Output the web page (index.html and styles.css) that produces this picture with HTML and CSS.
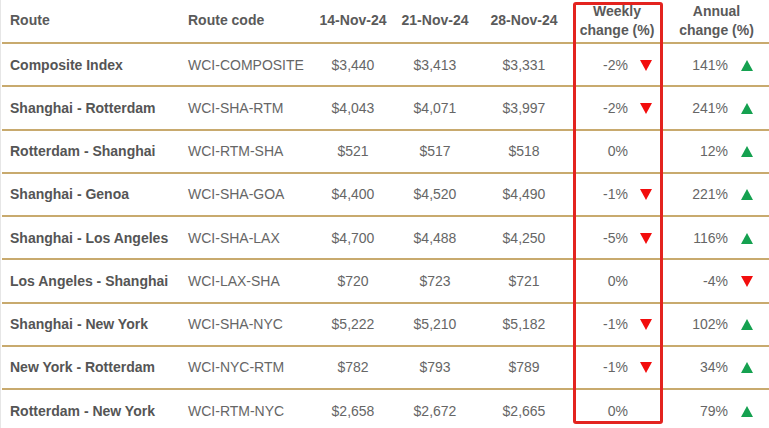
FILE: index.html
```html
<!DOCTYPE html>
<html>
<head>
<meta charset="utf-8">
<link rel="stylesheet" href="styles.css">
</head>
<body>
<div class="wrap">
  <table class="wci">
    <colgroup>
      <col class="c-route"><col class="c-code"><col class="c-d1"><col class="c-d2"><col class="c-d3"><col class="c-wk"><col class="c-yr">
    </colgroup>
    <thead>
      <tr>
        <th class="left">Route</th>
        <th class="left code">Route code</th>
        <th>14-Nov-24</th>
        <th>21-Nov-24</th>
        <th>28-Nov-24</th>
        <th class="wk">Weekly<br>change (%)</th>
        <th class="yr">Annual<br>change (%)</th>
      </tr>
    </thead>
    <tbody>
      <tr><td class="route">Composite Index</td><td class="code">WCI-COMPOSITE</td><td>$3,440</td><td>$3,413</td><td>$3,331</td><td class="chg wk">-2%<span class="arr down"></span></td><td class="chg yr">141%<span class="arr up"></span></td></tr>
      <tr><td class="route">Shanghai - Rotterdam</td><td class="code">WCI-SHA-RTM</td><td>$4,043</td><td>$4,071</td><td>$3,997</td><td class="chg wk">-2%<span class="arr down"></span></td><td class="chg yr">241%<span class="arr up"></span></td></tr>
      <tr><td class="route">Rotterdam - Shanghai</td><td class="code">WCI-RTM-SHA</td><td>$521</td><td>$517</td><td>$518</td><td class="chg wk">0%<span class="arr none"></span></td><td class="chg yr">12%<span class="arr up"></span></td></tr>
      <tr><td class="route">Shanghai - Genoa</td><td class="code">WCI-SHA-GOA</td><td>$4,400</td><td>$4,520</td><td>$4,490</td><td class="chg wk">-1%<span class="arr down"></span></td><td class="chg yr">221%<span class="arr up"></span></td></tr>
      <tr><td class="route">Shanghai - Los Angeles</td><td class="code">WCI-SHA-LAX</td><td>$4,700</td><td>$4,488</td><td>$4,250</td><td class="chg wk">-5%<span class="arr down"></span></td><td class="chg yr">116%<span class="arr up"></span></td></tr>
      <tr><td class="route">Los Angeles - Shanghai</td><td class="code">WCI-LAX-SHA</td><td>$720</td><td>$723</td><td>$721</td><td class="chg wk">0%<span class="arr none"></span></td><td class="chg yr">-4%<span class="arr down"></span></td></tr>
      <tr><td class="route">Shanghai - New York</td><td class="code">WCI-SHA-NYC</td><td>$5,222</td><td>$5,210</td><td>$5,182</td><td class="chg wk">-1%<span class="arr down"></span></td><td class="chg yr">102%<span class="arr up"></span></td></tr>
      <tr><td class="route">New York - Rotterdam</td><td class="code">WCI-NYC-RTM</td><td>$782</td><td>$793</td><td>$789</td><td class="chg wk">-1%<span class="arr down"></span></td><td class="chg yr">34%<span class="arr up"></span></td></tr>
      <tr><td class="route">Rotterdam - New York</td><td class="code">WCI-RTM-NYC</td><td>$2,658</td><td>$2,672</td><td>$2,665</td><td class="chg wk">0%<span class="arr none"></span></td><td class="chg yr">79%<span class="arr up"></span></td></tr>
    </tbody>
  </table>
  <div class="highlight"></div>
</div>
</body>
</html>
```

FILE: styles.css
```css
html, body {
  margin: 0;
  padding: 0;
  background: #ffffff;
}
body {
  font-family: "Liberation Sans", Arial, sans-serif;
  font-size: 14px;
  color: #666666;
}
.wrap {
  position: relative;
  width: 769px;
  height: 428px;
  overflow: hidden;
  border-left: 1px solid #e6e6e6;
  box-sizing: border-box;
  padding-left: 1px;
}
.wci {
  border-collapse: collapse;
  table-layout: fixed;
  width: 767px;
}
.c-route { width: 176px; }
.c-code { width: 134px; }
.c-d1 { width: 82px; }
.c-d2 { width: 82px; }
.c-d3 { width: 96px; }
.c-wk { width: 90px; }
.c-yr { width: 107px; }

.wci th {
  height: 43px;
  padding: 0 0 1px 0;
  box-sizing: border-box;
  font-weight: bold;
  color: #5a5a5a;
  text-align: center;
  line-height: 19px;
  vertical-align: middle;
  border-bottom: 2px solid #c8aa6e;
}
.wci th.left { text-align: left; padding-left: 8px; }
.wci th.code { padding-left: 10px; }
.wci th.yr { padding-left: 2px; }

.wci td {
  height: 41.25px;
  padding: 0;
  text-align: center;
  vertical-align: middle;
  border-bottom: 2px solid #c8aa6e;
  white-space: nowrap;
}
.wci tbody tr:last-child td { border-bottom: none; }
.wci td.route {
  text-align: left;
  padding-left: 8px;
  font-weight: bold;
  color: #555555;
}
.wci td.code { text-align: left; padding-left: 10px; }
.wci td.chg { text-align: right; }
.wci td.chg.wk { padding-right: 10px; }
.wci td.chg.yr { padding-right: 16px; }

.arr {
  display: inline-block;
  width: 0;
  height: 0;
  border-left: 6px solid transparent;
  border-right: 6px solid transparent;
  vertical-align: -1px;
}
.wk .arr { margin-left: 12px; }
.yr .arr { margin-left: 13px; }
.arr.down { border-top: 11px solid #f20d0d; }
.arr.up { border-bottom: 11px solid #15a150; }
.arr.none { border-top: 11px solid transparent; }

.highlight {
  position: absolute;
  left: 572px;
  top: 2px;
  width: 90px;
  height: 422px;
  box-sizing: border-box;
  border: 3px solid #e3231f;
  border-radius: 3px;
  pointer-events: none;
}
```
